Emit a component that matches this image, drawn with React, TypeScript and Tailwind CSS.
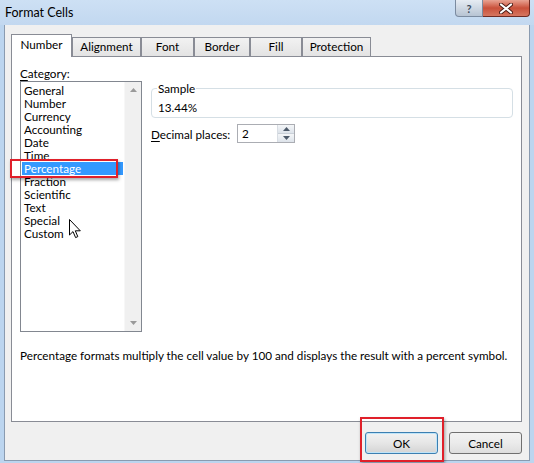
import React from "react";

const items = [
  "General",
  "Number",
  "Currency",
  "Accounting",
  "Date",
  "Time",
  "Percentage",
  "Fraction",
  "Scientific",
  "Text",
  "Special",
  "Custom",
];

const tabs = [
  { label: "Number", w: "w-[61px]", active: true },
  { label: "Alignment", w: "w-[69px]" },
  { label: "Font", w: "w-[53px]" },
  { label: "Border", w: "w-[56px]" },
  { label: "Fill", w: "w-[52px]" },
  { label: "Protection", w: "w-[69px]" },
];

function Cursor() {
  return (
    <svg width="13" height="20" viewBox="0 0 13 20" className="absolute left-[69px] top-[219px]">
      <path
        d="M0.5 0.5 L0.5 16 L4 12.6 L6.6 18.6 L8.8 17.6 L6.3 11.8 L11.3 11.8 Z"
        fill="#ffffff"
        stroke="#000000"
        strokeWidth="1"
        strokeLinejoin="round"
      />
    </svg>
  );
}

export default function App() {
  return (
    <div
      className="relative w-[534px] h-[463px] overflow-hidden bg-[#bcd5ef] text-[11.7px] text-black"
      style={{ fontFamily: "Lato, 'Noto Sans', 'DejaVu Sans', sans-serif" }}
    >
      {/* title bar */}
      <div className="flex h-[25px] items-start justify-between bg-gradient-to-b from-[#cde0f4] to-[#c2d8f0] pl-[5px] pr-[4px]">
        <div className="self-center whitespace-nowrap text-[12.5px] leading-[16px] text-black">Format Cells</div>
        <div className="flex h-[17px]">
          <div className="flex h-[17px] w-[28px] items-center justify-center rounded-bl-[4px] border border-t-0 border-[#7b8ba0] bg-gradient-to-b from-[#e6ecf3] to-[#b7c4d3] text-[11px] font-bold leading-none text-[#3c4a5c]">
            ?
          </div>
          <div className="flex h-[17px] w-[47px] items-center justify-center rounded-br-[4px] border border-t-0 border-l-0 border-[#6e2a22] bg-gradient-to-b from-[#e8a393] via-[#c9503a] to-[#d67660]">
            <svg width="14" height="11" viewBox="0 0 14 11">
              <path d="M2 1.5 L12 9.5 M12 1.5 L2 9.5" stroke="#4a1a14" strokeWidth="4" strokeLinecap="round" />
              <path d="M2 1.5 L12 9.5 M12 1.5 L2 9.5" stroke="#ffffff" strokeWidth="2.2" strokeLinecap="round" />
            </svg>
          </div>
        </div>
      </div>

      {/* client area */}
      <div className="mx-[4px] flex h-[436px] flex-col border border-t-0 border-[#8a9bb0] bg-[#f0f0f0] pl-[6px] pr-[7px] pt-[9px]">
        {/* tab strip */}
        <div className="relative z-10 -mb-px flex h-[23px] items-end">
          {tabs.map((t) =>
            t.active ? (
              <div
                key={t.label}
                className={`${t.w} flex h-[23px] items-center justify-center border border-b-0 border-[#898c95] bg-white pb-[2px]`}
              >
                {t.label}
              </div>
            ) : (
              <div
                key={t.label}
                className={`${t.w} flex h-[20px] items-center justify-center border border-[#898c95] bg-gradient-to-b from-[#f2f2f2] to-[#e3e3e3]`}
              >
                {t.label}
              </div>
            )
          )}
        </div>

        {/* panel */}
        <div className="flex h-[366px] flex-col border border-[#898c95] bg-white px-[8px] pt-[8px]">
          <div className="flex gap-[9px]">
            {/* left column */}
            <div className="flex w-[122px] flex-col">
              <div className="h-[16px] leading-[16px]">
                <span className="underline underline-offset-2">C</span>ategory:
              </div>
              <div className="flex h-[251px] border border-[#828790] bg-white">
                <div className="flex w-[102px] flex-col pl-[1px] pt-[2px]">
                  {items.map((it) =>
                    it === "Percentage" ? (
                      <div key={it} className="h-[13px] bg-[#3399ff] pl-[2px] leading-[13px] text-white">
                        {it}
                      </div>
                    ) : (
                      <div key={it} className="h-[13px] pl-[2px] leading-[13px]">
                        {it}
                      </div>
                    )
                  )}
                </div>
                <div className="ml-auto flex w-[17px] flex-col justify-between border-l border-[#f7f7f7] bg-[#f0f0f0] py-[6px]">
                  <div className="flex justify-center">
                    <svg width="7" height="4" viewBox="0 0 7 4">
                      <path d="M3.5 0 L7 4 L0 4 Z" fill="#9a9a9a" />
                    </svg>
                  </div>
                  <div className="flex justify-center">
                    <svg width="7" height="4" viewBox="0 0 7 4">
                      <path d="M0 0 L7 0 L3.5 4 Z" fill="#9a9a9a" />
                    </svg>
                  </div>
                </div>
              </div>
            </div>

            {/* right column */}
            <div className="flex flex-1 flex-col pt-[15px]">
              <fieldset className="h-[38px] rounded-[4px] border border-[#d5dfe5] px-[6px]">
                <legend className="ml-[-1px] px-[1px] leading-[16px]">Sample</legend>
                <div className="pt-[3px] leading-[16px]">13.44%</div>
              </fieldset>
              <div className="mt-[6px] flex items-center">
                <div className="w-[86px] whitespace-nowrap leading-[16px]">
                  <span className="underline underline-offset-2">D</span>ecimal places:
                </div>
                <div className="flex h-[19px] w-[58px] border border-[#abadb3] bg-white">
                  <div className="flex-1 pl-[4px] leading-[17px]">2</div>
                  <div className="flex w-[17px] flex-col border-l border-[#d8dde3]">
                    <div className="flex flex-1 items-center justify-center border-b border-[#c9d0d8] bg-gradient-to-b from-[#f4f6f8] to-[#dde3ea]">
                      <svg width="7" height="4" viewBox="0 0 7 4">
                        <path d="M3.5 0 L7 4 L0 4 Z" fill="#4d5a6a" />
                      </svg>
                    </div>
                    <div className="flex flex-1 items-center justify-center bg-gradient-to-b from-[#f4f6f8] to-[#dde3ea]">
                      <svg width="7" height="4" viewBox="0 0 7 4">
                        <path d="M0 0 L7 0 L3.5 4 Z" fill="#4d5a6a" />
                      </svg>
                    </div>
                  </div>
                </div>
              </div>
            </div>
          </div>

          <div className="mt-[15px] whitespace-nowrap leading-[16px]">
            Percentage formats multiply the cell value by 100 and displays the result with a percent symbol.
          </div>
        </div>

        {/* buttons */}
        <div className="mt-[10px] flex justify-end gap-[11px]">
          <button className="h-[22px] w-[73px] rounded-[3px] border border-[#3c7fb1] bg-gradient-to-b from-[#f2f2f2] via-[#e6e6e6] to-[#d4d4d4] shadow-[inset_0_0_0_1px_#bfe4f8] leading-[18px]">
            OK
          </button>
          <button className="h-[22px] w-[73px] rounded-[3px] border border-[#707070] bg-gradient-to-b from-[#f2f2f2] via-[#ebebeb] to-[#dddddd] leading-[18px]">
            Cancel
          </button>
        </div>
      </div>

      {/* annotations */}
      <div className="absolute left-[10px] top-[159px] h-[19px] w-[108px] border-2 border-[#e0202a] shadow-[1px_2px_3px_rgba(0,0,0,0.35)]" />
      <div className="absolute left-[360px] top-[417px] h-[45px] w-[84px] border-2 border-[#e0202a] shadow-[1px_2px_3px_rgba(0,0,0,0.35)]" />
      <Cursor />
    </div>
  );
}
